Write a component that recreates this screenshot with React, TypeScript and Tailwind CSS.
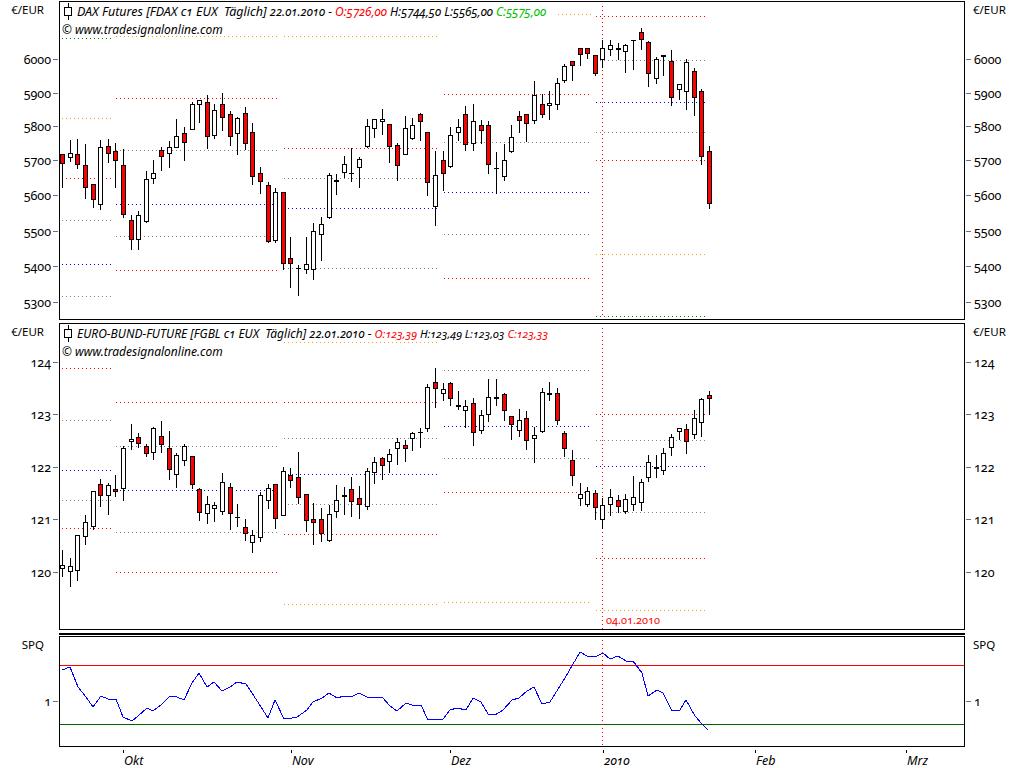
// Tradesignal chart sheet: DAX future, Bund future and SPQ indicator
type Candle = [number, number, number, number, number?];

// high, body top, body bottom, low, red. Values are pixels x3, as read from the chart
const daxCandles: Candle[] = [
  [460, 463, 490, 560, 1], [418, 458, 470, 482], [414, 463, 493, 503, 1], [430, 496, 560, 593, 1],
  [550, 553, 598, 620, 1], [418, 440, 613, 626], [414, 439, 458, 486, 1], [427, 454, 479, 560, 1],
  [445, 496, 643, 650, 1], [642, 661, 716, 747, 1], [630, 646, 716, 747], [510, 538, 662, 665],
  [477, 520, 535, 548], [438, 451, 467, 510, 1], [420, 442, 460, 500], [355, 409, 440, 440],
  [378, 400, 425, 480, 1], [303, 313, 388, 388], [296, 301, 311, 365], [282, 307, 407, 444, 1],
  [310, 331, 404, 414], [276, 313, 352, 390, 1], [330, 343, 407, 435, 1], [348, 355, 400, 462],
  [318, 340, 428, 447, 1], [366, 397, 527, 551, 1], [498, 520, 542, 578, 1], [543, 556, 722, 726, 1],
  [562, 577, 719, 726], [573, 577, 790, 808, 1], [708, 775, 790, 861, 1], [792, 805, 805, 885],
  [708, 793, 808, 819], [666, 694, 808, 837], [648, 673, 703, 780], [516, 526, 652, 655],
  [519, 541, 544, 582], [465, 493, 517, 530], [441, 520, 520, 543], [468, 478, 502, 560],
  [354, 379, 439, 441], [358, 358, 385, 411], [324, 358, 364, 402], [373, 373, 439, 486, 1],
  [427, 436, 496, 539, 1], [346, 385, 463, 463], [351, 376, 415, 417], [337, 343, 364, 420, 1],
  [394, 397, 547, 585, 1], [450, 526, 619, 674], [450, 481, 520, 570, 1], [378, 406, 499, 502],
  [354, 382, 397, 421], [316, 343, 433, 450, 1], [310, 364, 430, 450], [358, 376, 391, 430, 1],
  [360, 376, 493, 518, 1], [453, 505, 505, 578], [428, 481, 529, 540], [373, 412, 454, 457],
  [331, 349, 361, 396, 1], [342, 343, 370, 423, 1], [240, 286, 361, 368], [280, 313, 343, 350, 1],
  [270, 310, 316, 357], [232, 250, 313, 326], [190, 199, 240, 246], [181, 184, 196, 240, 1],
  [145, 145, 163, 195, 1], [142, 145, 160, 174, 1], [163, 166, 220, 224, 1], [117, 145, 178, 202],
  [117, 136, 148, 166], [126, 143, 146, 178], [130, 136, 154, 216], [118, 120, 120, 207],
  [82, 97, 118, 147, 1], [121, 127, 220, 258, 1], [169, 178, 235, 250], [163, 166, 169, 225],
  [148, 184, 292, 316, 1], [250, 253, 268, 298], [175, 187, 274, 327], [202, 214, 292, 345, 1],
  [265, 274, 469, 492, 1], [436, 454, 610, 624, 1],
];

const bundCandles: Candle[] = [
  [688, 736, 745, 768], [712, 739, 754, 798], [646, 646, 751, 780], [583, 607, 649, 671],
  [510, 514, 619, 628], [475, 493, 526, 558, 1], [487, 496, 526, 582], [462, 508, 514, 528, 1],
  [376, 385, 505, 540], [310, 358, 364, 387], [337, 352, 370, 382, 1], [370, 379, 400, 408, 1],
  [319, 325, 397, 416], [300, 349, 373, 396, 1], [330, 385, 448, 477, 1], [397, 406, 463, 500],
  [370, 379, 421, 435], [406, 409, 493, 503, 1], [502, 508, 577, 600, 1], [525, 553, 580, 608],
  [544, 556, 565, 603], [457, 487, 574, 582], [487, 502, 580, 627, 1], [549, 592, 592, 618],
  [595, 622, 640, 660, 1], [628, 646, 667, 696], [514, 526, 652, 662], [490, 505, 541, 564],
  [490, 493, 595, 624, 1], [438, 454, 586, 586], [442, 466, 481, 500, 1], [393, 472, 532, 550, 1],
  [520, 523, 601, 633, 1], [546, 598, 607, 672, 1], [561, 598, 640, 663, 1], [553, 583, 661, 664],
  [492, 541, 574, 590], [498, 526, 529, 582], [468, 508, 544, 588, 1], [495, 535, 553, 595, 1],
  [442, 454, 559, 566], [408, 427, 457, 490], [408, 415, 436, 476, 1], [385, 403, 424, 456],
  [351, 367, 385, 431], [358, 376, 385, 423, 1], [333, 340, 355, 390], [321, 337, 337, 381],
  [190, 202, 325, 332], [141, 187, 205, 261, 1], [187, 208, 220, 241], [184, 190, 235, 255, 1],
  [210, 254, 257, 268], [238, 259, 271, 320], [232, 250, 337, 375, 1], [267, 286, 331, 339],
  [174, 232, 283, 303], [174, 232, 235, 255], [217, 223, 271, 300, 1], [286, 289, 313, 357, 1],
  [265, 301, 331, 348], [271, 295, 361, 387, 1], [318, 346, 355, 426], [201, 217, 334, 336],
  [183, 220, 223, 240], [202, 220, 301, 312, 1], [331, 340, 385, 408, 1], [387, 421, 466, 495, 1],
  [487, 523, 535, 555], [499, 514, 553, 557], [508, 520, 562, 597, 1], [532, 556, 598, 624],
  [505, 532, 553, 584], [523, 541, 559, 577, 1], [520, 538, 574, 580], [465, 532, 553, 570],
  [475, 487, 547, 570], [403, 427, 472, 483], [403, 442, 445, 472], [381, 400, 451, 463],
  [340, 352, 382, 405], [320, 325, 334, 358], [310, 328, 364, 399, 1], [268, 295, 343, 355],
  [232, 238, 307, 348], [210, 226, 235, 282, 1],
];

const RED = '#ff0000';
const GREY = '#808080';
const BLUE = '#0000ff';
const ORANGE = '#ffa500';
const GREEN = '#008000';

// x1, x2, y, colour (pivot levels per month)
type Level = [number, number, number, string];

const daxLevels: Level[] = [
  [62, 113, 38, GREEN], [62, 113, 118, ORANGE], [62, 113, 178, RED], [62, 113, 220, GREY], [62, 113, 264, BLUE], [62, 113, 296, GREY],
  [115, 280, 36, ORANGE], [115, 280, 98, RED], [115, 280, 150, GREY], [115, 280, 204, BLUE], [115, 280, 237, GREY], [115, 280, 271, RED],
  [283, 440, 37, ORANGE], [283, 440, 148, RED], [283, 440, 178, GREY], [283, 440, 209, BLUE], [283, 440, 269, GREY],
  [557, 592, 15, ORANGE], [443, 592, 94, RED], [443, 592, 142, GREY], [443, 592, 192, BLUE], [443, 592, 235, GREY], [443, 592, 278, RED],
  [595, 707, 17, RED], [595, 707, 60, GREY], [595, 707, 103, BLUE], [595, 707, 132, GREY], [595, 707, 161, RED], [595, 707, 254, ORANGE], [595, 707, 317, GREEN],
];

const bundLevels: Level[] = [
  [62, 113, 369, RED], [62, 113, 420, GREY], [62, 113, 471, BLUE], [62, 113, 500, GREY], [62, 113, 528, RED],
  [115, 280, 403, RED], [115, 280, 447, GREY], [115, 280, 491, BLUE], [115, 280, 532, GREY], [115, 280, 572, RED],
  [283, 440, 342, ORANGE], [283, 440, 403, RED], [283, 440, 438, GREY], [283, 440, 474, BLUE], [283, 440, 504, GREY], [283, 440, 534, RED], [283, 440, 605, ORANGE],
  [443, 592, 371, GREY], [443, 592, 426, BLUE], [443, 592, 459, GREY], [443, 592, 492, RED], [443, 592, 603, ORANGE],
  [595, 707, 415, RED], [595, 707, 440, GREY], [595, 707, 466, BLUE], [595, 707, 513, GREY], [595, 707, 559, RED], [595, 707, 611, ORANGE],
];

const spqLine = [
  [62, 670], [70, 667], [78, 687], [86, 697], [93, 707], [101, 696], [108, 699], [116, 699], [123, 717], [132, 721],
  [138, 716], [147, 708], [153, 711], [162, 704], [170, 696], [177, 697], [184, 700], [192, 683], [199, 673], [207, 687],
  [214, 682], [222, 691], [230, 687], [237, 682], [246, 684], [252, 693], [261, 707], [268, 718], [275, 700], [284, 719],
  [292, 718], [297, 717], [307, 710], [313, 702], [322, 698], [329, 693], [337, 698], [344, 696], [351, 697], [359, 693],
  [367, 697], [382, 697], [390, 706], [397, 711], [406, 703], [412, 705], [421, 705], [428, 720], [432, 719], [443, 719],
  [450, 710], [457, 708], [466, 710], [473, 698], [481, 702], [488, 714], [495, 715], [503, 710], [512, 700], [519, 698],
  [527, 691], [534, 687], [542, 704], [550, 702], [565, 678], [580, 652], [587, 656], [595, 657], [603, 653], [610, 659],
  [618, 656], [626, 661], [633, 661], [642, 673], [648, 696], [657, 690], [663, 693], [672, 711], [680, 710], [686, 700],
  [695, 716], [702, 724], [708, 730],
];

const daxTicks = [
  { label: '6000', y: 59 }, { label: '5900', y: 93 }, { label: '5800', y: 126 }, { label: '5700', y: 160 },
  { label: '5600', y: 195 }, { label: '5500', y: 231 }, { label: '5400', y: 266 }, { label: '5300', y: 302 },
];
const bundTicks = [
  { label: '124', y: 362 }, { label: '123', y: 414 }, { label: '122', y: 467 }, { label: '121', y: 519 }, { label: '120', y: 572 },
];
const spqTicks = [{ label: '1', y: 701 }];

const months = [
  { label: 'Okt', x: 123 }, { label: 'Nov', x: 291 }, { label: 'Dez', x: 450 },
  { label: '2010', x: 603 }, { label: 'Feb', x: 755 }, { label: 'Mrz', x: 906 },
];

function Levels({ levels }: { levels: Level[] }) {
  return (
    <>
      {levels.map(([x1, x2, y, color], i) => {
        // dots sit on even pixels
        const row = Math.floor(y / 2) * 2 + 0.5;
        return <line key={i} x1={x1 + (x1 % 2)} x2={x2} y1={row} y2={row} stroke={color} strokeDasharray="1 3" />;
      })}
    </>
  );
}

function Candles({ data, top }: { data: Candle[]; top: number }) {
  return (
    <>
      {data.map(([h, t, b, l, red], i) => {
        const x = Math.floor(62.65 + 7.61 * i);
        const py = (v: number) => top + Math.round(v / 3) + 0.5;
        const flat = py(b) === py(t);
        return (
          <g key={i}>
            <line x1={x + 0.5} x2={x + 0.5} y1={py(h)} y2={py(l)} stroke="#000" />
            {flat ? (
              <line x1={x - 2} x2={x + 3} y1={py(t)} y2={py(t)} stroke="#000" />
            ) : (
              <rect x={x - 1.5} y={py(t)} width={4} height={py(b) - py(t)} fill={red ? RED : '#fff'} stroke="#000" />
            )}
          </g>
        );
      })}
    </>
  );
}

function ChartSvg({ top, height, children }: { top: number; height: number; children: React.ReactNode }) {
  return (
    <svg className="block w-full h-full" viewBox={`60 ${top} 904 ${height}`} shapeRendering="crispEdges">
      {children}
    </svg>
  );
}

// price scale beside a panel, labels sit at their scale position
function Axis({ side, unit, ticks, top }: {
  side: 'left' | 'right';
  unit: string;
  ticks: { label: string; y: number }[];
  top: number;
}) {
  const left = side === 'left';
  return (
    <div className={left ? 'relative w-[59px] shrink-0' : 'relative flex-1'}>
      <span className={left
        ? 'absolute top-px right-[15px] text-[11.5px] leading-[16px] text-black'
        : 'absolute top-px left-[8px] text-[11.5px] leading-[16px] text-black'}
      >
        {unit}
      </span>
      {ticks.map((t) => (
        <div
          key={t.label}
          className={left
            ? 'absolute right-px h-[16px] -mt-[8px] flex items-center gap-[2px]'
            : 'absolute left-px h-[16px] -mt-[8px] flex flex-row-reverse items-center gap-[3px]'}
          style={{ top: t.y - top }}
        >
          <span className="relative top-px text-[12.5px] leading-[16px] text-black oldstyle-nums">{t.label}</span>
          <span className="block w-[5px] h-px bg-gray-500" />
        </div>
      ))}
    </div>
  );
}

function CandleIcon() {
  return (
    <svg width="11" height="17" viewBox="0 0 11 17" className="shrink-0" shapeRendering="crispEdges">
      <line x1="5.5" x2="5.5" y1="0" y2="17" stroke="#000" />
      <rect x="1.5" y="4.5" width="7" height="8" fill="#fff" stroke="#000" />
    </svg>
  );
}

function ChartTitle({ children }: { children: React.ReactNode }) {
  return (
    <div className="absolute left-[3px] top-0 text-black oldstyle-nums">
      <div className="flex items-center gap-[3px] h-[18px] italic whitespace-pre">
        <CandleIcon />
        <span className="relative -top-px">{children}</span>
      </div>
      <div className="-ml-px h-[17px] text-[12px] leading-[19px] italic">© www.tradesignalonline.com</div>
    </div>
  );
}

export default function App() {
  return (
    <div className="w-[1024px] h-[768px] bg-white overflow-hidden pt-px font-['Noto_Sans',sans-serif] flex flex-col">
      {/* DAX */}
      <div className="flex h-[319px] shrink-0">
        <Axis side="left" unit="€/EUR" ticks={daxTicks} top={1} />
        <div className="relative w-[906px] shrink-0 border border-black">
          <ChartSvg top={2} height={317}>
            <Levels levels={daxLevels} />
            <line x1={602.5} x2={602.5} y1={6} y2={318} stroke={RED} strokeDasharray="1 3" />
            <Candles data={daxCandles} top={0} />
          </ChartSvg>
          <ChartTitle>
            <span className="text-[12.5px]">DAX Futures [FDAX c1 EUX  Täglich] </span>
            <span className="text-[12px]">22.01.2010 - <span className="text-[#ff0000]">O:5726,00</span> H:5744,50 L:5565,00 <span className="text-[#00c000]">C:5575,00</span></span>
          </ChartTitle>
        </div>
        <Axis side="right" unit="€/EUR" ticks={daxTicks} top={1} />
      </div>

      {/* Bund */}
      <div className="flex h-[307px] mt-[3px] shrink-0">
        <Axis side="left" unit="€/EUR" ticks={bundTicks} top={323} />
        <div className="relative w-[906px] shrink-0 border border-black">
          <ChartSvg top={324} height={305}>
            <Levels levels={bundLevels} />
            <line x1={602.5} x2={602.5} y1={328} y2={629} stroke={RED} strokeDasharray="1 3" />
            <Candles data={bundCandles} top={320} />
          </ChartSvg>
          <ChartTitle>
            <span className="text-[12px]">EURO-BUND-FUTURE [FGBL c1 EUX  Täglich] 22.01.2010 - </span>
            <span className="text-[11.2px]"><span className="text-[#ff0000]">O:123,39</span> H:123,49 L:123,03 <span className="text-[#ff0000]">C:123,33</span></span>
          </ChartTitle>
          <span className="absolute left-[546px] bottom-px text-[11px] leading-[16px] text-[#ff0000] oldstyle-nums">04.01.2010</span>
        </div>
        <Axis side="right" unit="€/EUR" ticks={bundTicks} top={323} />
      </div>

      {/* separator between the charts and the indicator */}
      <div className="ml-[59px] w-[906px] h-[2px] mt-[3px] bg-black shrink-0" />

      {/* SPQ */}
      <div className="flex h-[111px] mt-px shrink-0">
        <Axis side="left" unit="SPQ" ticks={spqTicks} top={636} />
        <div className="relative w-[906px] shrink-0 border border-black">
          <ChartSvg top={637} height={109}>
            <line x1={60} x2={964} y1={665.5} y2={665.5} stroke={RED} />
            <line x1={60} x2={964} y1={724.5} y2={724.5} stroke="#006400" />
            <line x1={602.5} x2={602.5} y1={640} y2={746} stroke={RED} strokeDasharray="1 3" />
            <polyline points={spqLine.map(([x, y]) => `${x},${y}`).join(' ')} fill="none" stroke={BLUE} />
          </ChartSvg>
        </div>
        <Axis side="right" unit="SPQ" ticks={spqTicks} top={636} />
      </div>

      {/* time scale */}
      <div className="relative flex-1">
        {months.map((m) => (
          <div key={m.label} className="absolute top-[3px]" style={{ left: m.x }}>
            <span className="block w-px h-[3px] bg-black" />
            <span className="block ml-[1px] text-[12.5px] leading-[16px] italic text-black oldstyle-nums">{m.label}</span>
          </div>
        ))}
      </div>
    </div>
  );
}
